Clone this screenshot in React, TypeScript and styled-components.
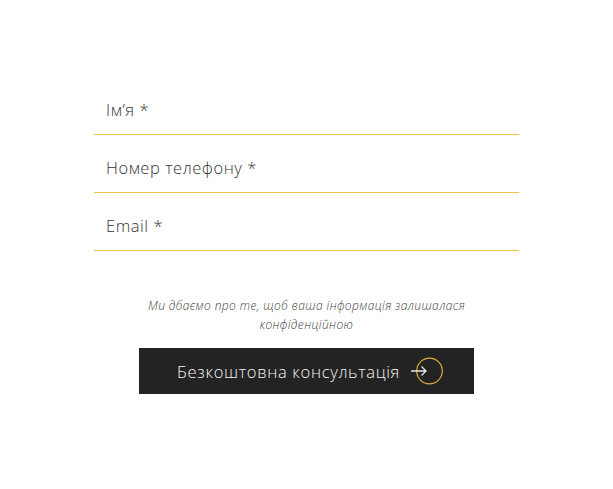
import React from "react";
import styled, { createGlobalStyle } from "styled-components";

const Global = createGlobalStyle`
  html, body { margin: 0; padding: 0; background: #fff; }
  body { font-family: "Open Sans", "Noto Sans", sans-serif; }
`;

const Page = styled.div`
  width: 613px;
  height: 489px;
  display: flex;
  flex-direction: column;
  align-items: center;
  padding-top: 77px;
  box-sizing: border-box;
`;

const Form = styled.form`
  width: 425px;
  display: flex;
  flex-direction: column;
  align-items: stretch;
`;

const Field = styled.label`
  height: 58px;
  box-sizing: border-box;
  border-bottom: 1px solid #f0c24e;
  display: flex;
  align-items: flex-end;
  padding: 0 12px 12px;
`;

const Input = styled.input`
  width: 100%;
  border: none;
  outline: none;
  background: transparent;
  padding: 0;
  font-family: "Open Sans", "Noto Sans", sans-serif;
  font-weight: 300;
  font-size: 16.5px;
  line-height: 24px;
  letter-spacing: 0.55px;
  color: #333;
  &::placeholder { color: #333; opacity: 1; }
`;

const Note = styled.p`
  margin: 45px 0 0;
  width: 340px;
  text-align: center;
  font-style: italic;
  font-weight: 300;
  font-size: 12px;
  line-height: 19px;
  letter-spacing: 0.4px;
  color: #444;
  align-self: center;
`;

const Button = styled.button`
  margin-top: 14px;
  align-self: center;
  width: 335px;
  height: 46px;
  border: none;
  background: #232323;
  color: #f4f4f4;
  display: flex;
  align-items: center;
  justify-content: center;
  gap: 10px;
  font-family: "Open Sans", "Noto Sans", sans-serif;
  font-weight: 300;
  font-size: 16.5px;
  letter-spacing: 0.68px;
  padding: 0 0 0 8px;
  cursor: pointer;
`;

const ArrowIcon = styled.svg`
  width: 34px;
  height: 28px;
  flex: none;
`;

export default function App() {
  return (
    <>
      <Global />
      <Page>
        <Form onSubmit={(e) => e.preventDefault()}>
          <Field><Input placeholder="Ім’я *" /></Field>
          <Field><Input placeholder="Номер телефону *" /></Field>
          <Field><Input placeholder="Email *" /></Field>
          <Note>Ми дбаємо про те, щоб ваша інформація залишалася конфіденційною</Note>
          <Button type="submit">
            Безкоштовна консультація
            <ArrowIcon viewBox="0 0 34 28">
              <circle cx="19.5" cy="14" r="12.8" fill="none" stroke="#d9ab3a" strokeWidth="1.2" />
              <path d="M1 14 H16 M11.5 9.5 L16 14 L11.5 18.5" fill="none" stroke="#e8e8e8" strokeWidth="1.3" />
            </ArrowIcon>
          </Button>
        </Form>
      </Page>
    </>
  );
}
